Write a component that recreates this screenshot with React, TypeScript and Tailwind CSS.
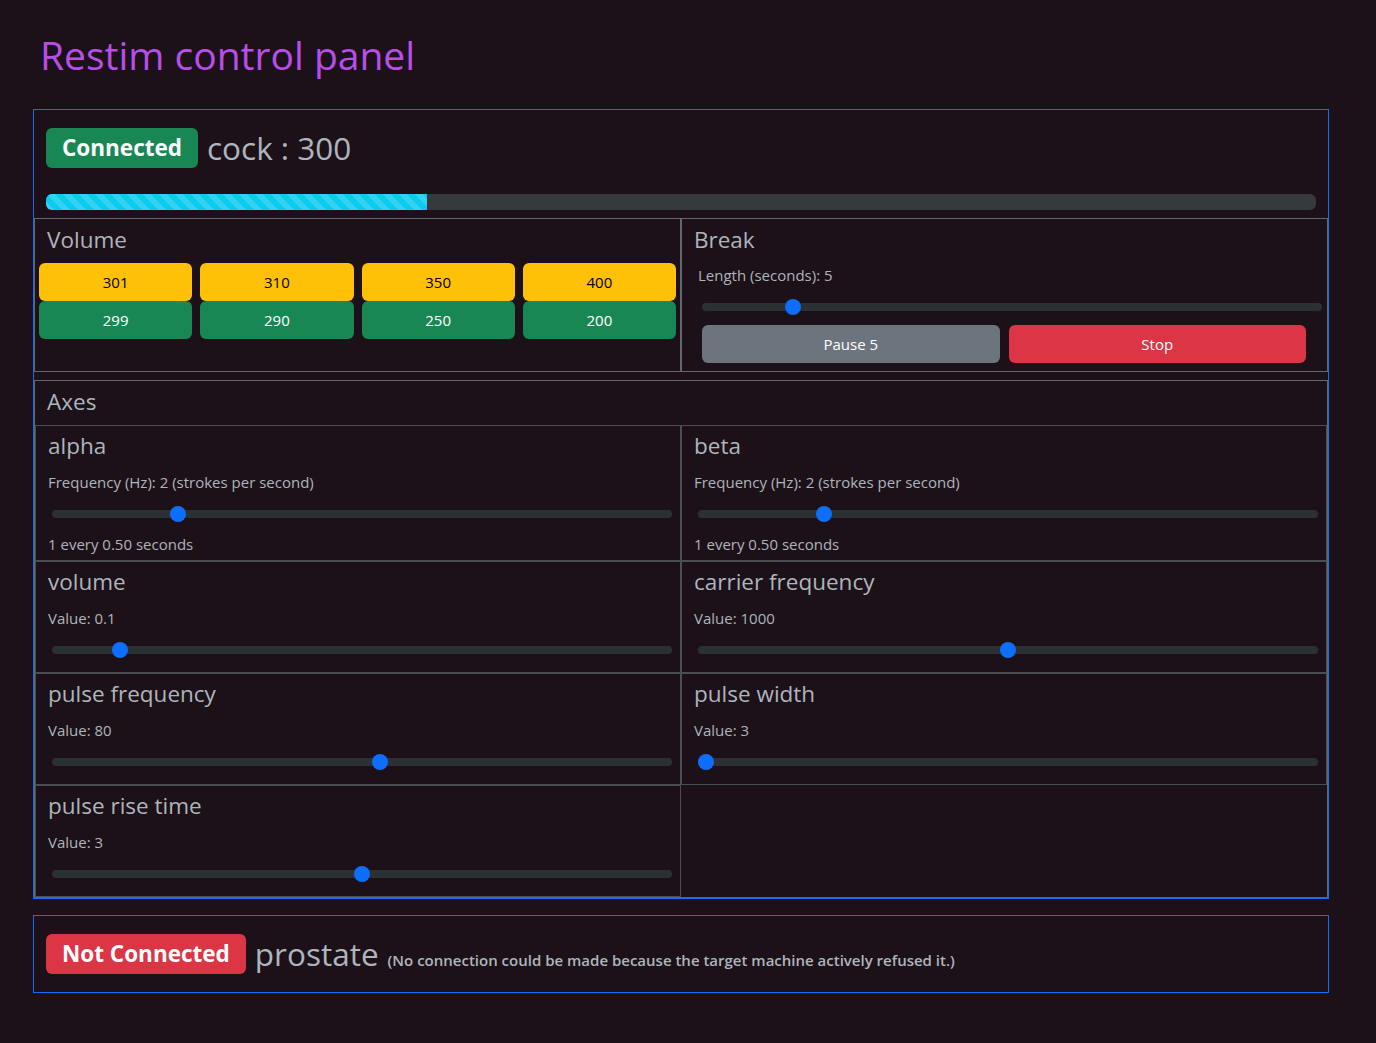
type Axis = { name: string; label: string; value: number; note?: string }

const axes: Axis[] = [
  { name: 'alpha', label: 'Frequency (Hz): 2 (strokes per second)', value: 0.1954, note: '1 every 0.50 seconds' },
  { name: 'beta', label: 'Frequency (Hz): 2 (strokes per second)', value: 0.1954, note: '1 every 0.50 seconds' },
  { name: 'volume', label: 'Value: 0.1', value: 0.1 },
  { name: 'carrier frequency', label: 'Value: 1000', value: 0.5 },
  { name: 'pulse frequency', label: 'Value: 80', value: 0.53 },
  { name: 'pulse width', label: 'Value: 3', value: 0 },
  { name: 'pulse rise time', label: 'Value: 3', value: 0.5 },
]

function Slider({ value, className = '' }: { value: number; className?: string }) {
  return (
    <div className={`relative flex h-4 w-[620px] items-center ${className}`}>
      <div className="h-2 w-full rounded-full bg-[#2b3035]" />
      <span
        className="absolute top-0 size-4 rounded-full bg-[#0d6efd]"
        style={{ left: value * 604 }}
      />
    </div>
  )
}

function AxisCell({ axis }: { axis: Axis }) {
  return (
    <div className="border border-[#4a4d52] px-3 pt-[5px] pb-1">
      <h4 className="text-[22.5px] leading-[29px] text-[#adb5bd]">{axis.name}</h4>
      <div className="mt-[10px] text-[15px] leading-6 text-[#adb5bd]">{axis.label}</div>
      <Slider value={axis.value} className="mt-3 mb-[10px] ml-1" />
      {axis.note && <div className="text-[15px] leading-6 text-[#adb5bd]">{axis.note}</div>}
    </div>
  )
}

export default function App() {
  return (
    <div className="min-h-screen bg-[#1c1118] pt-[31px] pb-12 font-['Open_Sans',sans-serif]">
      <h1 className="ml-[40px] mb-[30px] text-[39px] leading-[48px] font-medium text-[#b94de9]">
        Restim control panel
      </h1>

      <div className="ml-[33px] w-[1296px] border border-[#0d6efd]">
        <div className="flex h-10 items-center px-3 mt-[18px]">
          <span className="flex h-10 items-center rounded-md bg-[#198754] px-4 text-[22.5px] font-bold text-white">
            Connected
          </span>
          <span className="ml-[9px] text-[31.5px] leading-10 font-medium text-[#adb5bd]">cock : 300</span>
        </div>

        <div className="mx-3 mt-[26px] h-4 overflow-hidden rounded-md bg-[#363a3f]">
          <div className="h-full w-[30%] bg-[#0dcaf0] bg-[linear-gradient(45deg,rgba(255,255,255,.15)_25%,transparent_25%,transparent_50%,rgba(255,255,255,.15)_50%,rgba(255,255,255,.15)_75%,transparent_75%,transparent)] bg-[length:16px_16px]" />
        </div>

        <div className="mt-2 grid grid-cols-2">
          <div className="h-[154px] border border-[#62666d] pt-[6px]">
            <h4 className="px-3 text-[22.5px] leading-[29px] text-[#adb5bd]">Volume</h4>
            <div className="mt-[9px] grid grid-cols-4 gap-x-2 px-1 text-[15px]">
              {['301', '310', '350', '400'].map((v) => (
                <button key={v} className="h-[38px] rounded-md bg-[#ffc107] text-black">
                  {v}
                </button>
              ))}
              {['299', '290', '250', '200'].map((v) => (
                <button key={v} className="h-[38px] rounded-md bg-[#198754] text-white">
                  {v}
                </button>
              ))}
            </div>
          </div>

          <div className="h-[154px] border border-[#62666d] pt-[6px]">
            <h4 className="px-3 text-[22.5px] leading-[29px] text-[#adb5bd]">Break</h4>
            <div className="mt-[9px] ml-4 text-[15px] leading-6 text-[#adb5bd]">Length (seconds): 5</div>
            <Slider value={0.1374} className="mt-3 ml-5" />
            <div className="mt-[10px] ml-5 grid w-[604px] grid-cols-2 gap-x-[9px] text-[15px] text-white">
              <button className="h-[38px] rounded-md bg-[#6c757d]">Pause 5</button>
              <button className="h-[38px] rounded-md bg-[#dc3545]">Stop</button>
            </div>
          </div>
        </div>

        <div className="mt-2 border border-[#62666d]">
          <h4 className="px-3 pt-[6px] pb-[9px] text-[22.5px] leading-[29px] text-[#adb5bd]">Axes</h4>
          <div className="grid grid-cols-2">
            {axes.map((a) => (
              <AxisCell key={a.name} axis={a} />
            ))}
          </div>
        </div>
      </div>

      <div className="mt-4 ml-[33px] flex w-[1296px] items-center border border-[#0d6efd] px-3 py-[18px]">
        <span className="flex h-10 items-center rounded-md bg-[#dc3545] px-4 text-[22.5px] font-bold text-white">
          Not Connected
        </span>
        <span className="ml-[9px] flex h-10 items-baseline text-[#adb5bd]">
          <span className="text-[31.5px] leading-10 font-medium">prostate</span>
          <span className="ml-[9px] text-[15px] font-semibold">
            (No connection could be made because the target machine actively refused it.)
          </span>
        </span>
      </div>
    </div>
  )
}
